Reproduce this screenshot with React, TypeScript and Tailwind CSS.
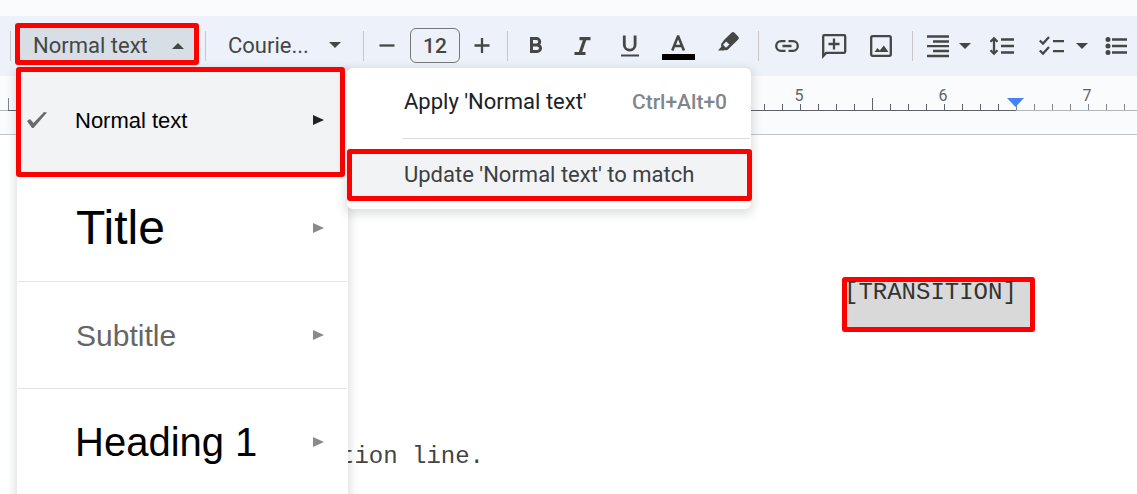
import React from 'react';

const inchLabels: Record<number, string> = { 44: '5', 52: '6', 60: '7' };

function Caret({ up = false }: { up?: boolean }) {
  return (
    <svg width="12" height="6" viewBox="0 0 12 6" className="shrink-0" fill="#444746" aria-hidden="true">
      <path d={up ? 'M0 6 6 0l6 6z' : 'M0 0h12L6 6z'} />
    </svg>
  );
}

function Separator({ className = '' }: { className?: string }) {
  return <div className={`h-[30px] w-px shrink-0 bg-[#c7c7c7] ${className}`} />;
}

function Glyph({ children }: { children: React.ReactNode }) {
  return (
    <svg width="30" height="30" viewBox="0 0 30 30" className="shrink-0 overflow-visible" fill="none" stroke="#444746" strokeWidth="2.3" aria-hidden="true">
      {children}
    </svg>
  );
}

function ToolButton({ label, className = 'w-12 justify-center', children }: any) {
  return (
    <button type="button" aria-label={label} className={`flex h-[42px] shrink-0 items-center ${className}`}>
      {children}
    </button>
  );
}

function SubArrow({ active = false }: { active?: boolean }) {
  return (
    <svg width="11" height="10" viewBox="0 0 11 10" className="shrink-0" fill={active ? '#222' : '#8a8a8a'} aria-hidden="true">
      <path d="M0 0v10l11-5z" />
    </svg>
  );
}

function Submenu() {
  return (
    <div className="absolute top-0 left-[330px] w-[404px] rounded-md bg-white pt-[10px] pb-2 font-[Roboto,sans-serif] text-[22px] leading-6 shadow-[0_3px_9px_3px_rgba(60,64,67,0.15)]">
      <button type="button" className="flex h-12 w-full items-center justify-between pr-6 pl-[57px] text-[#202124]">
        <span>Apply 'Normal text'</span>
        <span className="text-[21px] font-medium text-[#80868b]">Ctrl+Alt+0</span>
      </button>
      <div className="mt-3 mr-px mb-[10px] ml-[55px] h-px bg-[#dadce0]" />
      <button type="button" className="flex h-[52px] w-[405px] items-center rounded-[3px] border-[5px] border-[#ff0000] bg-[#f1f3f4] pl-[52px] text-[#3c4043]">
        Update 'Normal text' to match
      </button>
    </div>
  );
}

function StyleMenu() {
  return (
    <div className="absolute top-[45px] left-[2px] z-10 w-[331px] rounded-t-md bg-white font-['Liberation_Sans',Arial,sans-serif] font-normal text-black shadow-[0_3px_9px_3px_rgba(60,64,67,0.15)]">
      <div className="h-[108px]">
        <button type="button" className="-mt-px -ml-px flex h-[110px] w-[329px] items-center rounded-[3px] border-[5px] border-[#ff0000] bg-[#f1f3f4] pr-4 pb-1 pl-[6px] text-[22px]">
          <svg width="20" height="16" viewBox="0 0 20 16" className="mr-7 shrink-0" fill="#6b6b6b" aria-hidden="true">
            <path d="M0 9l3-2 3.500 4L17 0l3 .5L6.500 16H5z" />
          </svg>
          <span className="flex-1 text-left">Normal text</span>
          <SubArrow active />
        </button>
      </div>
      <button type="button" className="flex h-[106px] w-full items-center justify-between pr-6 pl-[59px] text-[48px]">
        Title <SubArrow />
      </button>
      <div className="mx-px h-px bg-[#e3e3e3]" />
      <button type="button" className="flex h-[106px] w-full items-center justify-between pr-6 pl-[59px] text-[30px] text-[#666]">
        Subtitle <SubArrow />
      </button>
      <div className="mx-px h-px bg-[#e3e3e3]" />
      <button type="button" className="flex h-[106px] w-full items-center justify-between pr-6 pl-[58px] text-[40px]">
        Heading 1 <SubArrow />
      </button>
      <Submenu />
    </div>
  );
}

function Toolbar() {
  return (
    <div className="flex h-[60px] items-center bg-[#edf2fa] pl-[10px] font-[Roboto,sans-serif] text-[22px] text-[#444746]">
      <Separator />
      <div className="relative -mt-1 ml-1 shrink-0">
        <button type="button" aria-expanded="true" className="flex h-[42px] w-[184px] items-center justify-between rounded-[3px] border-[5px] border-[#ff0000] bg-[#d8dee6] pt-[3px] pr-[10px] pl-[13px]">
          Normal text <Caret up />
        </button>
        <StyleMenu />
      </div>
      <Separator className="ml-[6px]" />
      <button type="button" className="flex h-[42px] w-[157px] shrink-0 items-center justify-between pr-[22px] pb-[2px] pl-[22px]">
        Courie... <Caret />
      </button>
      <Separator />
      <ToolButton label="Decrease font size" className="w-[46px] justify-center">
        <Glyph><path d="M7.500 14.500h15" /></Glyph>
      </ToolButton>
      <input aria-label="Font size" defaultValue="12" className="-mt-px h-[35px] w-[50px] shrink-0 rounded-md border border-[#747775] text-center text-[21px] font-medium" />
      <ToolButton label="Increase font size" className="mr-1 w-[43px] justify-center">
        <Glyph><path d="M7.500 14.500h15M15 7v15" /></Glyph>
      </ToolButton>
      <Separator />
      <ToolButton label="Bold" className="ml-1 w-12 justify-center">
        <Glyph><path d="M10.500 7.500h5a3.200 3.200 0 0 1 0 6.400h-5zM10.500 13.900h5.700a3.300 3.300 0 0 1 0 6.600h-5.700z" strokeWidth="3" /></Glyph>
      </ToolButton>
      <ToolButton label="Italic">
        <Glyph><path d="M10.500 7.700h11M5.500 22.500h11M16 7.700l-5 14.800" strokeWidth="3.200" /></Glyph>
      </ToolButton>
      <ToolButton label="Underline" className="w-[46px] justify-center">
        <Glyph>
          <path d="M8.300 4.500v9.300a5.400 5.400 0 0 0 10.800 0V4.500" strokeWidth="2.800" />
          <path d="M5 24.500h18" strokeWidth="2" />
        </Glyph>
      </ToolButton>
      <ToolButton label="Text color">
        <Glyph>
          <path d="M9.300 19.500l5.600-14h.4l5.600 14M11 15h8" strokeWidth="2.600" />
          <path d="M-1 26h33" stroke="#000" strokeWidth="6" />
        </Glyph>
      </ToolButton>
      <ToolButton label="Highlight color">
        <Glyph>
          <path d="M13.500 8.500 20.500 1.800q1.500-1.500 3 0l3.700 3.700q1.500 1.500 0 3L20 15.500l-3 3q-1.500 1.500-3.200.2L13 19.500H7l3.500-4q-1.200-1.500 0-3zM15.200 10.500 12 13.800l3 3L18.400 13.500z" fill="#444746" fillRule="evenodd" stroke="none" />
        </Glyph>
      </ToolButton>
      <Separator className="ml-2" />
      <ToolButton label="Insert link" className="ml-1 w-12 justify-center">
        <Glyph><path d="M13.500 10.200H9a4.800 4.800 0 0 0 0 9.600h4.500M16.500 10.200H21a4.800 4.800 0 0 1 0 9.600h-4.500M10.500 15h9" /></Glyph>
      </ToolButton>
      <ToolButton label="Add comment">
        <Glyph>
          <path d="M3.200 25V5.200q0-1 1-1h20q1 0 1 1v15.600q0 1-1 1H6.200z" />
          <path d="M14 7.500v11M8.500 13h11" />
          <path d="M2.500 27v-5h5z" fill="#444746" stroke="none" />
        </Glyph>
      </ToolButton>
      <ToolButton label="Insert image">
        <Glyph>
          <rect x="3.200" y="5.200" width="19.600" height="19.600" rx="1.500" />
          <path d="M6.500 21l3-4 2.300 2.500 4-5 4.700 6.500z" fill="#444746" stroke="none" />
        </Glyph>
      </ToolButton>
      <Separator className="ml-[5px]" />
      <ToolButton label="Align right" className="w-[65px] gap-[6px] pl-[10px]">
        <Glyph><path d="M4 5.500h22M10 10.500h16M4 15.200h22M10 20h16M4 25h22" strokeWidth="2.300" /></Glyph>
        <Caret />
      </ToolButton>
      <ToolButton label="Line spacing">
        <Glyph><path d="M14 8.500h13M14 15h13M14 21.500h13M7 8v14M3.500 10.800 7 7.300l3.500 3.500M3.500 19.200 7 22.700l3.500-3.500" /></Glyph>
      </ToolButton>
      <ToolButton label="Checklist" className="w-[68px] gap-[10px] pl-[10px]">
        <Glyph><path d="M17 10.200h11M17 20.200h11M3.800 9.500l3.200 3 6-6.500M3.800 19.500l3.200 3 6-6.500" /></Glyph>
        <Caret />
      </ToolButton>
      <ToolButton label="Bulleted list" className="w-[45px] pl-[6px]">
        <Glyph>
          <path d="M12 8.500h15M12 15h15M12 21.500h15" />
          <path d="M8 8.500h0M8 15h0M8 21.500h0" strokeWidth="5" strokeLinecap="round" />
        </Glyph>
      </ToolButton>
    </div>
  );
}

function Ruler() {
  return (
    <div className="relative h-[59px] overflow-hidden border-b border-[#c4c7c5] font-[Roboto,sans-serif]">
      <div className="flex h-[35px] items-end border-b border-[#b4b7ba] pl-2">
        {Array.from({ length: 64 }, (_, i) => (
          <div key={i} className={`relative w-[18px] shrink-0 border-l ${i % 8 === 0 ? 'h-3' : 'h-[6px]'} ${i > 0 && i < 56 ? 'border-[#5f6368]' : 'border-[#80868b]'}`}>
            {inchLabels[i] && (
              <span className="absolute bottom-1 -left-[11px] w-[18px] text-center text-base leading-5 text-[#5f6368]">{inchLabels[i]}</span>
            )}
          </div>
        ))}
      </div>
      <div className="absolute top-[34px] left-2 h-px w-[1008px] bg-[#5f6368]" />
      <svg width="17" height="9" viewBox="0 0 17 9" className="absolute top-[22px] left-[1007px]" fill="#4285f4" aria-hidden="true">
        <path d="M0 0h17L8.500 9z" />
      </svg>
    </div>
  );
}

export default function App() {
  return (
    <div className="min-h-screen overflow-hidden bg-[#f9fbfd] pt-4">
      <Toolbar />
      <Ruler />
      <main className="min-h-[359px] bg-white pt-[142px] font-['Liberation_Mono',monospace] text-[24px] leading-7 text-[#444]">
        <div className="flex justify-end pr-[102px]">
          <p className="h-[55px] w-[193px] rounded-[3px] bg-[#d9d9d9] pt-[2px] pl-[2px] whitespace-nowrap text-[#333] inset-ring-[5px] inset-ring-[#ff0000]">[TRANSITION]</p>
        </div>
        <p className="pt-[111px] pl-[340px]">tion line.</p>
      </main>
    </div>
  );
}
